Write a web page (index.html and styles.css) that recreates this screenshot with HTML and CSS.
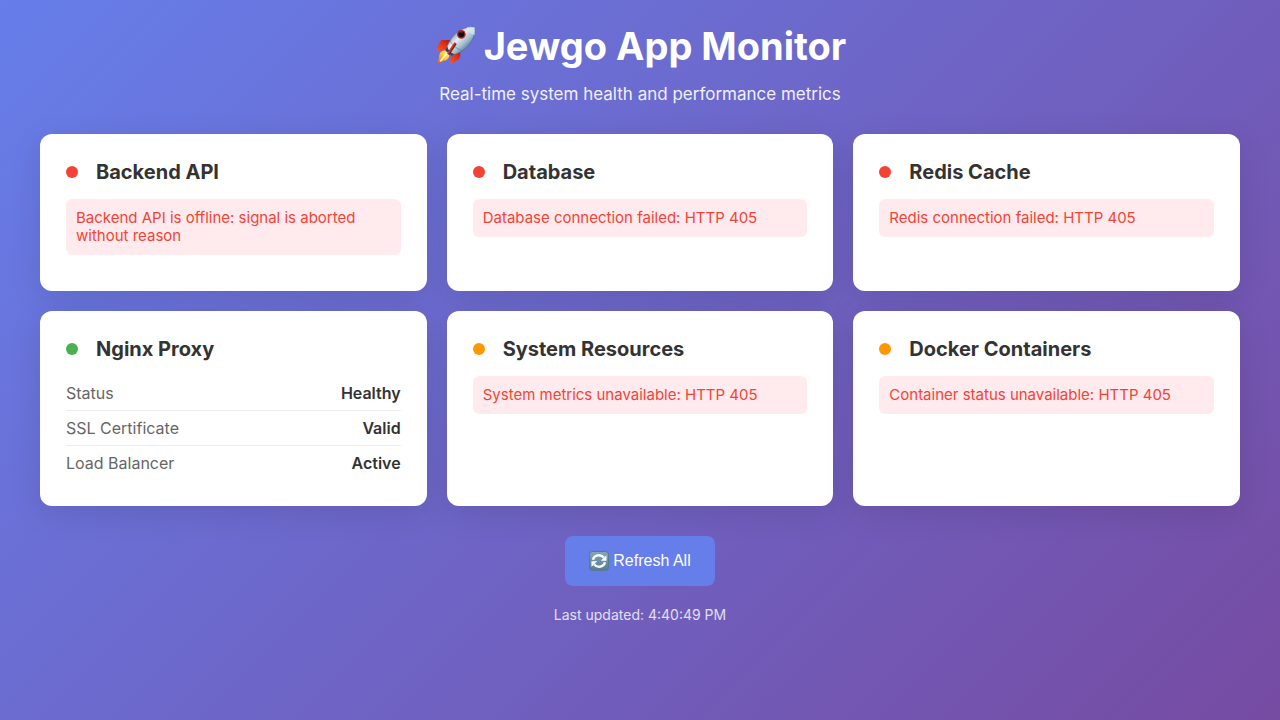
FILE: index.html
```html
<!DOCTYPE html>
<html lang="en">
<head>
<meta charset="utf-8">
<meta name="viewport" content="width=device-width, initial-scale=1">
<title>Jewgo App Monitor</title>
<link rel="stylesheet" href="styles.css">
</head>
<body>
<div class="container">
  <header class="header">
    <h1 class="header-title">
      <svg class="rocket" viewBox="27 33 126 120" aria-hidden="true">
        <defs>
          <linearGradient id="hull" x1="0" y1="0" x2="1" y2="1">
            <stop offset="0.2" stop-color="#6f8798"/>
            <stop offset="0.42" stop-color="#e4edf2"/>
            <stop offset="0.6" stop-color="#a3bfd1"/>
            <stop offset="0.8" stop-color="#3f6c8e"/>
          </linearGradient>
          <linearGradient id="fin" x1="0" y1="1" x2="1" y2="0">
            <stop offset="0" stop-color="#ff5a1c"/>
            <stop offset="0.6" stop-color="#e42a15"/>
            <stop offset="1" stop-color="#8c1616"/>
          </linearGradient>
          <linearGradient id="flame" x1="1" y1="0" x2="0" y2="1">
            <stop offset="0" stop-color="#fff59a"/>
            <stop offset="0.5" stop-color="#fdc927"/>
            <stop offset="1" stop-color="#f0501a"/>
          </linearGradient>
        </defs>
        <path d="M80 76 50 75Q47 76 33 106L56 108 72 94Z" fill="url(#fin)"/>
        <path d="M80 104Q77 120 76 148L102 132Q106 127 106 109L103 99Z" fill="url(#fin)"/>
        <path d="M61 106Q45 108 43 120L38 146 54 138Q70 135 73 122Z" fill="url(#flame)"/>
        <path d="M46 139 68 112" stroke="#fffbd0" stroke-width="5" fill="none"/>
        <path d="M149 37Q120 34 98 50Q78 66 67 92L62 105 80 120Q108 116 129 93Q151 69 149 37Z" fill="url(#hull)" stroke="#4c6376" stroke-width="1.5"/>
        <path d="M125 37Q130 55 149 61Q151 48 149 37Q137 34 125 37Z" fill="#d9e9f3" opacity=".65"/>
        <path d="M75 77Q83 96 111 107" stroke="#45637a" stroke-width="2" fill="none" opacity=".65"/>
        <path d="M67 94Q69 109 88 118L80 122 61 106Z" fill="#324653"/>
        <circle cx="109" cy="58" r="13" fill="#b2291f"/>
        <circle cx="109" cy="58" r="9" fill="#190c12"/>
        <path d="M103 52Q108 48 113 52" stroke="#776873" stroke-width="2" fill="none"/>
        <path d="M92 85 70 118" stroke="#74251e" stroke-width="8"/>
        <path d="M90 83 69 115" stroke="#e3352a" stroke-width="4"/>
      </svg>
      <span>Jewgo App Monitor</span>
    </h1>
    <p class="subtitle">Real-time system health and performance metrics</p>
  </header>
  <main>
    <div class="grid">
      <section class="card">
        <h2 class="card-title"><span class="dot offline"></span>Backend API</h2>
        <p class="error">Backend API is offline: signal is aborted without reason</p>
      </section>
      <section class="card">
        <h2 class="card-title"><span class="dot offline"></span>Database</h2>
        <p class="error">Database connection failed: HTTP 405</p>
      </section>
      <section class="card">
        <h2 class="card-title"><span class="dot offline"></span>Redis Cache</h2>
        <p class="error">Redis connection failed: HTTP 405</p>
      </section>
      <section class="card">
        <h2 class="card-title"><span class="dot online"></span>Nginx Proxy</h2>
        <dl class="metrics">
          <div class="metric"><dt>Status</dt><dd>Healthy</dd></div>
          <div class="metric"><dt>SSL Certificate</dt><dd>Valid</dd></div>
          <div class="metric"><dt>Load Balancer</dt><dd>Active</dd></div>
        </dl>
      </section>
      <section class="card">
        <h2 class="card-title"><span class="dot warning"></span>System Resources</h2>
        <p class="error">System metrics unavailable: HTTP 405</p>
      </section>
      <section class="card">
        <h2 class="card-title"><span class="dot warning"></span>Docker Containers</h2>
        <p class="error">Container status unavailable: HTTP 405</p>
      </section>
    </div>
    <div class="actions">
      <button class="refresh" type="button">
        <svg class="refresh-icon" viewBox="0 0 20 20" aria-hidden="true">
          <defs>
            <linearGradient id="tile" x1="0" y1="0" x2="0" y2="1">
              <stop offset="0" stop-color="#87a6b8"/>
              <stop offset="1" stop-color="#537c96"/>
            </linearGradient>
          </defs>
          <rect x="0.5" y="0.5" width="19" height="19" rx="3" fill="url(#tile)" stroke="#587990"/>
          <path d="M4 8.7C5 3.8 11.5 2.8 14.8 6.5M16 11.3C15 16.2 8.5 17.2 5.2 13.5" fill="none" stroke="#fff" stroke-width="2.4"/>
          <path d="M17.5 4.2V9.8H11.8ZM2.5 15.8V10.2H8.2Z" fill="#fff"/>
        </svg>
        Refresh All
      </button>
      <p class="updated">Last updated: 4:40:49 PM</p>
    </div>
  </main>
</div>
</body>
</html>
```
FILE: styles.css
```css
* {
  box-sizing: border-box;
  margin: 0;
  padding: 0;
}

body {
  min-height: 100vh;
  padding: 20px;
  background: linear-gradient(135deg, #667eea 0%, #764ba2 100%);
  color: #333;
  font-family: Inter, "Liberation Sans", sans-serif;
  font-size: 16px;
  line-height: 18px;
}

.container {
  max-width: 1200px;
  margin: 0 auto;
}

.header {
  margin-bottom: 30px;
  color: #fff;
  text-align: center;
}

.header-title {
  display: flex;
  align-items: center;
  justify-content: center;
  gap: 8px;
  margin-bottom: 12px;
  font-size: 38px;
  font-weight: 700;
  line-height: 52px;
}

.rocket {
  width: 42px;
  height: 40px;
}

.subtitle {
  font-size: 17px;
  line-height: 20px;
  opacity: 0.9;
}

.grid {
  display: grid;
  grid-template-columns: repeat(auto-fit, minmax(300px, 1fr));
  gap: 20px;
  margin-bottom: 30px;
}

.card {
  padding: 26px;
  border-radius: 12px;
  background: #fff;
  box-shadow: 0 8px 32px rgba(0, 0, 0, 0.1);
}

.card-title {
  display: flex;
  align-items: center;
  gap: 18px;
  margin-bottom: 15px;
  font-size: 20px;
  font-weight: 700;
  line-height: 24px;
}

.dot {
  width: 12px;
  height: 12px;
  border-radius: 50%;
}

.offline {
  background: #f44336;
}

.online {
  background: #4caf50;
}

.warning {
  background: #ff9800;
}

.error {
  margin-bottom: 10px;
  padding: 10px;
  border-radius: 6px;
  background: #ffebee;
  color: #f44336;
  font-size: 15px;
}

.metric {
  display: flex;
  justify-content: space-between;
  padding: 8px 0;
  border-bottom: 1px solid #eee;
}

.metric:last-child {
  border-bottom: none;
}

.metric dt {
  color: #666;
}

.metric dd {
  font-weight: 600;
}

.actions {
  display: flex;
  flex-direction: column;
  align-items: center;
  gap: 20px;
}

.refresh {
  display: flex;
  align-items: center;
  gap: 4px;
  padding: 15px 24px;
  border: none;
  border-radius: 8px;
  background: #667eea;
  color: #fff;
  font-family: "Liberation Sans", Arial, sans-serif;
  font-size: 16px;
  line-height: 18px;
  cursor: pointer;
}

.refresh-icon {
  width: 20px;
  height: 20px;
}

.updated {
  color: #fff;
  font-size: 14px;
  opacity: 0.8;
}
```
